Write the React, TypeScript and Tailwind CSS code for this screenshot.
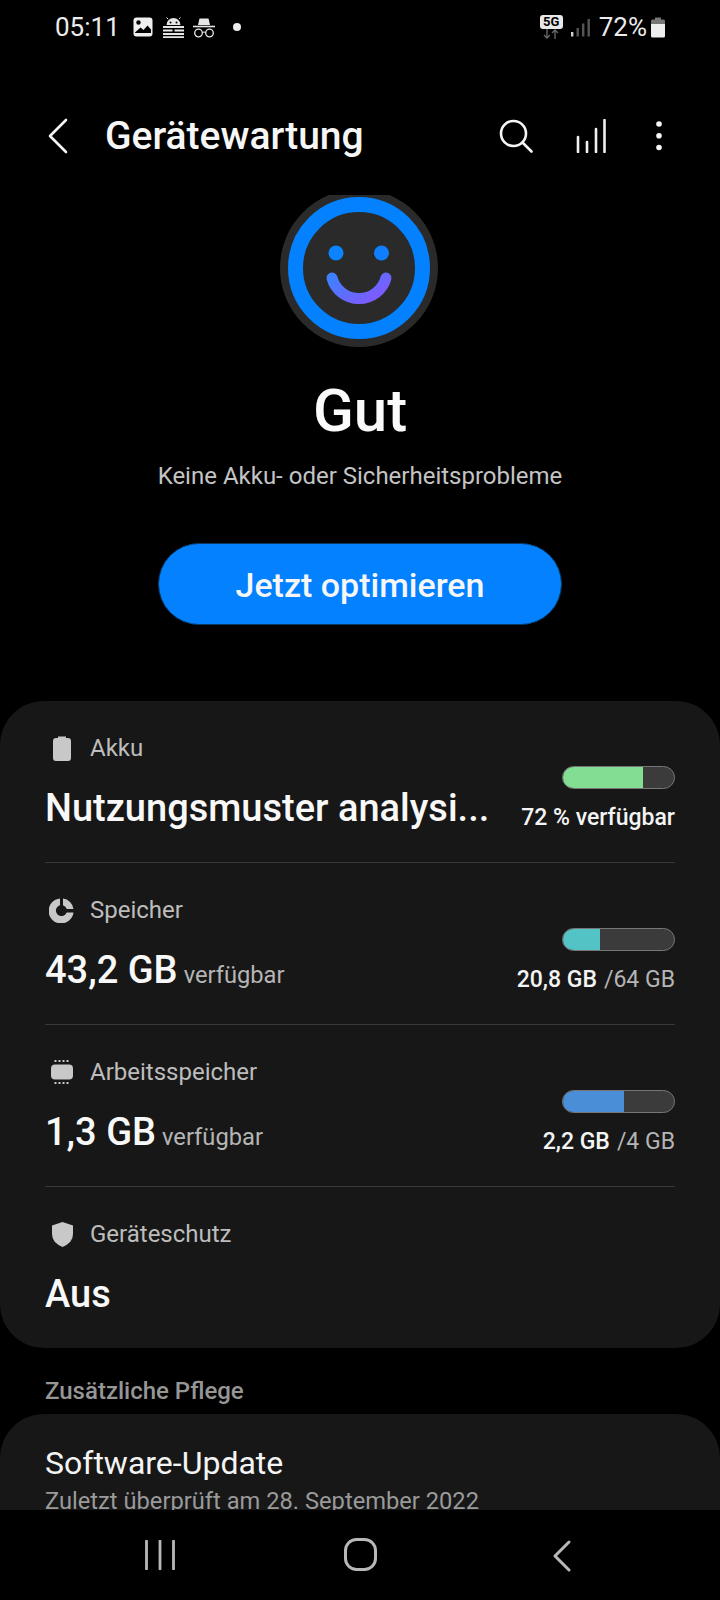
import React from "react";

function StatusLeft() {
  return (
    <div className="flex items-center">
      <span className="text-[26px] leading-none text-[#ececec] w-[78px]">05:11</span>
      <svg width="20" height="20" viewBox="0 0 20 20" className="mr-[10px]">
        <rect x="0.5" y="0.5" width="19" height="19" rx="3" fill="#efefef" />
        <circle cx="5.5" cy="5.5" r="2.2" fill="#000" />
        <path d="M2 15.5 L7.5 10.5 L10.5 13 L14.5 8.5 L18 12.5 V16 H2 Z" fill="#000" />
      </svg>
      <svg width="21" height="21" viewBox="0 0 21 21" className="mr-[9px]">
        <path d="M3.5 8 A7 7 0 0 1 17.5 8 Z" fill="#e6e6e6" />
        <path d="M5 2 L3.5 0.5 M16 2 L17.5 0.5" stroke="#e6e6e6" strokeWidth="1" />
        <circle cx="7.5" cy="5.5" r="1" fill="#000" />
        <circle cx="13.5" cy="5.5" r="1" fill="#000" />
        <path d="M0 10 H21 M0 13.5 H21 M0 17 H21 M0 20.3 H21" stroke="#e6e6e6" strokeWidth="2" />
        <rect x="9.5" y="11" width="2" height="4.5" fill="#000" />
      </svg>
      <svg width="22" height="21" viewBox="0 0 22 21" className="mr-[18px]">
        <path d="M5 8 L6.5 1.5 H15.5 L17 8 Z" fill="#e6e6e6" />
        <path d="M0 9.5 H22" stroke="#e6e6e6" strokeWidth="1.6" />
        <circle cx="5.5" cy="16" r="3.8" fill="none" stroke="#e6e6e6" strokeWidth="1.3" />
        <circle cx="16.5" cy="16" r="3.8" fill="none" stroke="#e6e6e6" strokeWidth="1.3" />
        <path d="M9.3 15.5 Q11 14.5 12.7 15.5" fill="none" stroke="#e6e6e6" strokeWidth="1.2" />
      </svg>
      <span className="w-2 h-2 rounded-full bg-[#ececec]" />
    </div>
  );
}

function StatusRight() {
  return (
    <div className="flex items-center">
      <div className="flex flex-col items-center w-[23px] mr-[8px] mt-[-1px]">
        <span className="w-[23px] h-[14px] rounded-[3px] bg-[#e8e8e8] text-black text-[13px] font-bold leading-[14px] text-center">5G</span>
        <svg width="18" height="10" viewBox="0 0 18 10">
          <path d="M5 0 V9 M2 6 L5 9 L8 6" fill="none" stroke="#666" strokeWidth="1.4" />
          <path d="M13 10 V1 M10 4 L13 1 L16 4" fill="none" stroke="#666" strokeWidth="1.4" />
        </svg>
      </div>
      <svg width="19" height="19" viewBox="0 0 19 19" className="mr-[9px]">
        <rect x="0" y="14" width="2.4" height="4.5" fill="#d0d0d0" />
        <rect x="5.5" y="10" width="2.4" height="8.5" fill="#555" />
        <rect x="11" y="5.5" width="2.4" height="13" fill="#555" />
        <rect x="16.5" y="1" width="2.4" height="17.5" fill="#555" />
      </svg>
      <span className="text-[26px] leading-none text-[#ececec] mr-[4px]">72%</span>
      <svg width="14" height="21" viewBox="0 0 14 21">
        <path d="M4 0.5 H10 V2.5 H12.5 Q14 2.5 14 4 V7 H0 V4 Q0 2.5 1.5 2.5 H4 Z" fill="#777" />
        <path d="M0 7 H14 V19 Q14 20.5 12.5 20.5 H1.5 Q0 20.5 0 19 Z" fill="#efefef" />
      </svg>
    </div>
  );
}

function Header() {
  return (
    <div className="flex items-center h-[90px] pl-[48px] pr-[58px]">
      <svg width="20" height="36" viewBox="0 0 20 36" className="mr-[37px]">
        <path d="M18 2 L2 18 L18 34" fill="none" stroke="#f4f4f4" strokeWidth="2.6" strokeLinecap="round" strokeLinejoin="round" />
      </svg>
      <span className="flex-1 text-[39px] leading-none font-medium text-[#f6f6f6]">Gerätewartung</span>
      <svg width="34" height="34" viewBox="0 0 34 34" className="mr-[43px]">
        <circle cx="14.5" cy="14.5" r="12.5" fill="none" stroke="#f6f6f6" strokeWidth="2.6" />
        <path d="M23.5 23.5 L32.5 32.5" stroke="#f6f6f6" strokeWidth="2.6" strokeLinecap="round" />
      </svg>
      <svg width="30" height="34" viewBox="0 0 30 34" className="mr-[50px]">
        <path d="M2 18 V33 M11 23 V33 M20 10 V33 M28.5 1 V33" stroke="#f0f0f0" strokeWidth="2.6" strokeLinecap="round" />
      </svg>
      <svg width="6" height="30" viewBox="0 0 6 30">
        <circle cx="3" cy="3" r="2.8" fill="#f6f6f6" />
        <circle cx="3" cy="14.7" r="2.8" fill="#f6f6f6" />
        <circle cx="3" cy="26.5" r="2.8" fill="#f6f6f6" />
      </svg>
    </div>
  );
}

function Smiley() {
  return (
    <svg width="158" height="158" viewBox="0 0 158 158" className="mt-[-6px] ml-[-2px]">
      <defs>
        <linearGradient id="smile" x1="0" y1="0" x2="1" y2="0.6">
          <stop offset="0" stopColor="#3f80ff" />
          <stop offset="1" stopColor="#7c5cff" />
        </linearGradient>
      </defs>
      <circle cx="79" cy="79" r="79" fill="#2a2a2a" />
      <circle cx="79" cy="79" r="63.5" fill="none" stroke="#0381fe" strokeWidth="15" />
      <circle cx="56" cy="64" r="7.5" fill="#0a84ff" />
      <circle cx="101.5" cy="64" r="7.5" fill="#0f7fff" />
      <path d="M52 89 A28 28 0 0 0 106 89" fill="none" stroke="url(#smile)" strokeWidth="11" strokeLinecap="round" />
    </svg>
  );
}

function Label({ icon, text }: { icon: React.ReactNode; text: string }) {
  return (
    <div className="flex items-center h-[28px]">
      <div className="w-[45px] flex justify-start">{icon}</div>
      <span className="text-[24px] leading-none text-[#bdbdbd]">{text}</span>
    </div>
  );
}

function Bar({ pct, colorClass }: { pct: number; colorClass: string }) {
  return (
    <div className="w-[113px] h-[23px] rounded-full bg-[#3b3b3b] border border-[#767676] overflow-hidden">
      <div className={`h-full ${colorClass}`} style={{ width: `${pct}%` }} />
    </div>
  );
}

function Row({
  icon,
  label,
  left,
  right,
  pct,
  colorClass,
}: {
  icon: React.ReactNode;
  label: string;
  left: React.ReactNode;
  right?: React.ReactNode;
  pct?: number;
  colorClass?: string;
}) {
  return (
    <div className="h-[162px] flex justify-between items-start border-b border-[#383838] last:border-b-0">
      <div className="flex flex-col pt-[33px] min-w-0">
        <Label icon={icon} text={label} />
        <div className="mt-[24px] flex items-baseline">{left}</div>
      </div>
      {pct !== undefined && colorClass && (
        <div className="flex flex-col items-end pt-[65px] shrink-0">
          <Bar pct={pct} colorClass={colorClass} />
          <div className="mt-[16px] text-[23px] leading-[26px]">{right}</div>
        </div>
      )}
    </div>
  );
}

const big = "text-[38px] leading-[44px] font-medium text-[#f8f8f8]";
const avail = "text-[23.7px] leading-none text-[#b5b5b5] ml-[6px]";
const strong = "font-medium text-[#f4f4f4]";
const weak = "text-[#b5b5b5] ml-[7px]";

export default function App() {
  return (
    <div
      className="w-[720px] h-[1600px] bg-black flex flex-col overflow-hidden"
      style={{ fontFamily: "Roboto, 'Noto Sans', sans-serif" }}
    >
      <div className="h-[54px] flex items-center justify-between pl-[55px] pr-[55px] shrink-0">
        <StatusLeft />
        <StatusRight />
      </div>
      <div className="h-[141px] shrink-0 flex flex-col justify-start pt-[37px]">
        <Header />
      </div>
      <div className="flex-1 min-h-0 overflow-hidden flex flex-col">
        <div className="flex flex-col items-center shrink-0">
          <Smiley />
          <div className="mt-[30px] text-[60px] leading-[68px] font-medium text-[#fafafa]">Gut</div>
          <div className="mt-[18px] text-[24px] leading-[26px] text-[#c4c4c4]">Keine Akku- oder Sicherheitsprobleme</div>
          <div className="mt-[54px] w-[404px] h-[82px] pt-[3px] rounded-full bg-[#0381fe] border border-[#0b3a66] flex items-center justify-center text-[34px] font-medium text-[#f6f6f6]">
            Jetzt optimieren
          </div>
        </div>
        <div className="mt-[76px] shrink-0 bg-[#171717] rounded-[44px] px-[45px] h-[647px]">
          <Row
            icon={
              <svg width="18" height="25" viewBox="0 0 18 25" className="ml-[8px]">
                <path d="M5 0.5 H13 V2 H15 Q18 2 18 5 V22 Q18 25 15 25 H3 Q0 25 0 22 V5 Q0 2 3 2 H5 Z" fill="#c8c8c8" />
              </svg>
            }
            label="Akku"
            left={<span className="text-[38px] leading-[44px] font-medium text-[#f8f8f8] w-[450px] block">Nutzungsmuster analysi...</span>}
            right={<span className={strong}>72 % verfügbar</span>}
            pct={72}
            colorClass="bg-[#83dd92]"
          />
          <Row
            icon={
              <svg width="25" height="25" viewBox="0 0 25 25" className="ml-[4px]">
                <path fillRule="evenodd" d="M11 0.5 V7.3 A5.5 5.5 0 1 0 17.6 14.5 H24.5 A12.5 12.5 0 1 1 11 0.5 Z" fill="#c8c8c8" />
                <path d="M14 0.5 A12 12 0 0 1 24.5 11 H17.8 A6 6 0 0 0 14 7.3 Z" fill="#c8c8c8" />
              </svg>
            }
            label="Speicher"
            left={
              <>
                <span className={big}>43,2 GB</span>
                <span className={avail}>verfügbar</span>
              </>
            }
            right={
              <>
                <span className={strong}>20,8 GB</span>
                <span className={weak}>/64 GB</span>
              </>
            }
            pct={33}
            colorClass="bg-[#53c3c6]"
          />
          <Row
            icon={
              <svg width="22" height="24" viewBox="0 0 22 24" className="ml-[6px]">
                <rect x="0" y="4.500" width="22" height="15" rx="4" fill="#c8c8c8" />
                <path d="M3.500 1 H18.500 M3.500 23 H18.500" stroke="#c8c8c8" strokeWidth="2" strokeDasharray="2 2" />
              </svg>
            }
            label="Arbeitsspeicher"
            left={
              <>
                <span className={big}>1,3 GB</span>
                <span className={avail}>verfügbar</span>
              </>
            }
            right={
              <>
                <span className={strong}>2,2 GB</span>
                <span className={weak}>/4 GB</span>
              </>
            }
            pct={55}
            colorClass="bg-[#4a8ed8]"
          />
          <Row
            icon={
              <svg width="21" height="25" viewBox="0 0 21 25" className="ml-[7px]">
                <path d="M10.500 0 L21 3.500 V12 Q21 20.500 10.500 25 Q0 20.500 0 12 V3.500 Z" fill="#c8c8c8" />
              </svg>
            }
            label="Geräteschutz"
            left={<span className={big}>Aus</span>}
          />
        </div>
        <div className="mt-[29px] px-[45px] text-[24px] leading-[28px] font-medium text-[#969696] shrink-0">Zusätzliche Pflege</div>
        <div className="mt-[9px] shrink-0 bg-[#171717] rounded-[44px] px-[45px] pt-[31px] h-[140px]">
          <div className="text-[32px] leading-[36px] text-[#f4f4f4]">Software-Update</div>
          <div className="mt-[6px] text-[23.7px] leading-[28px] text-[#9a9a9a]">Zuletzt überprüft am 28. September 2022</div>
        </div>
      </div>
      <div className="h-[90px] shrink-0 flex items-start pt-[30px] pl-[145px]">
        <svg width="30" height="30" viewBox="0 0 30 30" className="mr-[169px]">
          <path d="M1.500 1 V29 M15 1 V29 M28.500 1 V29" stroke="#b8b8b8" strokeWidth="2.8" strokeLinecap="round" />
        </svg>
        <svg width="33" height="33" viewBox="0 0 33 33" className="mr-[175px] mt-[-2px]">
          <rect x="1.500" y="1.500" width="30" height="30" rx="11" fill="none" stroke="#b8b8b8" strokeWidth="3" />
        </svg>
        <svg width="20" height="32" viewBox="0 0 20 32">
          <path d="M17 2 L3 16 L17 30" fill="none" stroke="#b8b8b8" strokeWidth="3" strokeLinecap="round" strokeLinejoin="round" />
        </svg>
      </div>
    </div>
  );
}
